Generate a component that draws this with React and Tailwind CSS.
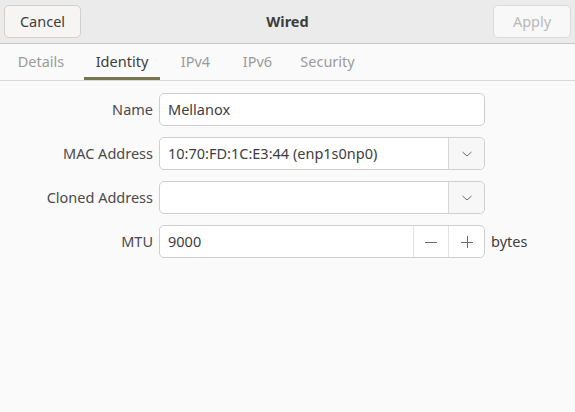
import React from "react";

const Chevron = () => (
  <svg width="14" height="14" viewBox="0 0 14 14" fill="none">
    <path d="M2.5 5 L7 9 L11.5 5" stroke="#6e6e6e" strokeWidth="1" />
  </svg>
);

function Label({ children }) {
  return (
    <div className="w-[159px] pr-[6px] text-right text-[#4a4a4a]">{children}</div>
  );
}

export default function App() {
  return (
    <div
      className="w-[575px] h-[412px] bg-[#fafafa] text-[14.5px] text-[#3d3d3d] flex flex-col overflow-hidden"
      style={{ fontFamily: '"Noto Sans", "Open Sans", sans-serif' }}
    >
      {/* Header */}
      <div className="h-[44px] bg-[#ebebeb] border-b border-[#c8c8c8] flex items-center justify-between px-[4px] relative">
        <button className="w-[77px] h-[33px] rounded-[5px] border border-[#d2cfcc] bg-[#f6f5f4] text-[#3d3d3d]">
          Cancel
        </button>
        <div className="absolute left-0 right-0 text-center font-bold text-[#3d3d3d] pointer-events-none">
          Wired
        </div>
        <button className="w-[78px] h-[33px] rounded-[5px] border border-[#dcdad8] bg-[#f8f8f8] text-[#b9b9b9]">
          Apply
        </button>
      </div>

      {/* Tabs */}
      <div className="h-[37px] border-b border-[#d8d8d8] flex items-stretch bg-[#fafafa]">
        <div className="w-[82px] flex items-center justify-center text-[#9a9a9a]">Details</div>
        <div className="w-[76px] ml-[2px] flex items-center justify-center text-[#3d3d3d] border-b-[3px] border-[#77754f] pt-[3px]">
          Identity
        </div>
        <div className="w-[71px] flex items-center justify-center text-[#9a9a9a]">IPv4</div>
        <div className="w-[53px] flex items-center justify-center text-[#9a9a9a]">IPv6</div>
        <div className="w-[87px] flex items-center justify-center text-[#9a9a9a]">Security</div>
      </div>

      {/* Form */}
      <div className="flex flex-col gap-[11px] pt-[12px]">
        <div className="flex items-center">
          <Label>Name</Label>
          <div className="w-[326px] h-[33px] rounded-[5px] border border-[#cfcfcf] bg-white flex items-center px-[8px]">
            Mellanox
          </div>
        </div>
        <div className="flex items-center">
          <Label>MAC Address</Label>
          <div className="w-[326px] h-[33px] rounded-[5px] border border-[#cfcfcf] bg-white flex">
            <div className="flex-1 flex items-center px-[8px]">10:70:FD:1C:E3:44 (enp1s0np0)</div>
            <div className="w-[36px] border-l border-[#d6d6d6] bg-[#f7f7f7] rounded-r-[5px] flex items-center justify-center">
              <Chevron />
            </div>
          </div>
        </div>
        <div className="flex items-center">
          <Label>Cloned Address</Label>
          <div className="w-[326px] h-[33px] rounded-[5px] border border-[#cfcfcf] bg-white flex">
            <div className="flex-1" />
            <div className="w-[36px] border-l border-[#d6d6d6] bg-[#f7f7f7] rounded-r-[5px] flex items-center justify-center">
              <Chevron />
            </div>
          </div>
        </div>
        <div className="flex items-center">
          <Label>MTU</Label>
          <div className="w-[326px] h-[33px] rounded-[5px] border border-[#cfcfcf] bg-white flex">
            <div className="flex-1 flex items-center px-[8px]">9000</div>
            <div className="w-[35px] border-l border-[#e2e2e2] flex items-center justify-center">
              <svg width="14" height="14" viewBox="0 0 14 14">
                <path d="M1 7.5 H13" stroke="#6a6a6a" strokeWidth="1" />
              </svg>
            </div>
            <div className="w-[36px] border-l border-[#e2e2e2] flex items-center justify-center">
              <svg width="14" height="14" viewBox="0 0 14 14">
                <path d="M1 7.5 H13 M7.5 1 V13" stroke="#6a6a6a" strokeWidth="1" />
              </svg>
            </div>
          </div>
          <div className="pl-[6px] text-[#3d3d3d]">bytes</div>
        </div>
      </div>
    </div>
  );
}
